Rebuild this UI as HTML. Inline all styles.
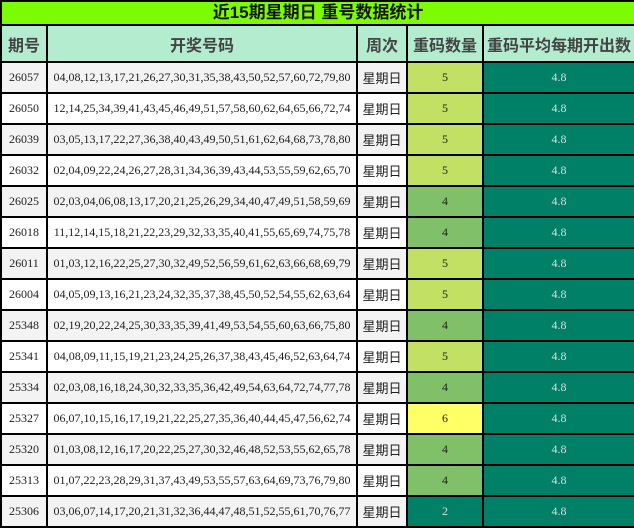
<!DOCTYPE html>
<html><head><meta charset="utf-8"><style>
body{margin:0;background:#fff}
table{border-collapse:collapse;table-layout:fixed;width:634px;font-family:"Liberation Serif","Noto Serif CJK SC",serif;font-size:12px;color:#222}
td{border:2px solid #000;text-align:center;padding:0;white-space:nowrap;overflow:hidden}
.t td{background:#7cfc00;height:22px;line-height:22px;font-family:"Liberation Sans","Noto Sans CJK SC",sans-serif;font-weight:bold;font-size:17px;color:#111}
.h td{background:#b4ecd0;height:35px;font-family:"Liberation Sans","Noto Sans CJK SC",sans-serif;font-weight:bold;font-size:16px;color:#444}
.r td{height:29px}
.r:nth-child(odd) td{background:#f3f3f3}
.wk{font-family:"Liberation Sans","Noto Sans CJK SC",sans-serif;font-size:13px}
.r td.c5{background:#c1e064}.r td.c4{background:#80c068}.r td.c6{background:#ffff66}.r td.c2{background:#008066;color:#ddd}
.r td.a{background:#008066;color:#ddd}
</style></head><body>
<table>
<colgroup><col style="width:46px"><col style="width:310px"><col style="width:50px"><col style="width:76px"><col style="width:152px"></colgroup>
<tbody>
<tr class="t"><td colspan="5">近15期星期日 重号数据统计</td></tr>
<tr class="h"><td>期号</td><td>开奖号码</td><td>周次</td><td>重码数量</td><td>重码平均每期开出数</td></tr>
</tbody>
<tbody>
<tr class="r"><td>26057</td><td>04,08,12,13,17,21,26,27,30,31,35,38,43,50,52,57,60,72,79,80</td><td class="wk">星期日</td><td class="c5">5</td><td class="a">4.8</td></tr>
<tr class="r"><td>26050</td><td>12,14,25,34,39,41,43,45,46,49,51,57,58,60,62,64,65,66,72,74</td><td class="wk">星期日</td><td class="c5">5</td><td class="a">4.8</td></tr>
<tr class="r"><td>26039</td><td>03,05,13,17,22,27,36,38,40,43,49,50,51,61,62,64,68,73,78,80</td><td class="wk">星期日</td><td class="c5">5</td><td class="a">4.8</td></tr>
<tr class="r"><td>26032</td><td>02,04,09,22,24,26,27,28,31,34,36,39,43,44,53,55,59,62,65,70</td><td class="wk">星期日</td><td class="c5">5</td><td class="a">4.8</td></tr>
<tr class="r"><td>26025</td><td>02,03,04,06,08,13,17,20,21,25,26,29,34,40,47,49,51,58,59,69</td><td class="wk">星期日</td><td class="c4">4</td><td class="a">4.8</td></tr>
<tr class="r"><td>26018</td><td>11,12,14,15,18,21,22,23,29,32,33,35,40,41,55,65,69,74,75,78</td><td class="wk">星期日</td><td class="c4">4</td><td class="a">4.8</td></tr>
<tr class="r"><td>26011</td><td>01,03,12,16,22,25,27,30,32,49,52,56,59,61,62,63,66,68,69,79</td><td class="wk">星期日</td><td class="c5">5</td><td class="a">4.8</td></tr>
<tr class="r"><td>26004</td><td>04,05,09,13,16,21,23,24,32,35,37,38,45,50,52,54,55,62,63,64</td><td class="wk">星期日</td><td class="c5">5</td><td class="a">4.8</td></tr>
<tr class="r"><td>25348</td><td>02,19,20,22,24,25,30,33,35,39,41,49,53,54,55,60,63,66,75,80</td><td class="wk">星期日</td><td class="c4">4</td><td class="a">4.8</td></tr>
<tr class="r"><td>25341</td><td>04,08,09,11,15,19,21,23,24,25,26,37,38,43,45,46,52,63,64,74</td><td class="wk">星期日</td><td class="c5">5</td><td class="a">4.8</td></tr>
<tr class="r"><td>25334</td><td>02,03,08,16,18,24,30,32,33,35,36,42,49,54,63,64,72,74,77,78</td><td class="wk">星期日</td><td class="c4">4</td><td class="a">4.8</td></tr>
<tr class="r"><td>25327</td><td>06,07,10,15,16,17,19,21,22,25,27,35,36,40,44,45,47,56,62,74</td><td class="wk">星期日</td><td class="c6">6</td><td class="a">4.8</td></tr>
<tr class="r"><td>25320</td><td>01,03,08,12,16,17,20,22,25,27,30,32,46,48,52,53,55,62,65,78</td><td class="wk">星期日</td><td class="c4">4</td><td class="a">4.8</td></tr>
<tr class="r"><td>25313</td><td>01,07,22,23,28,29,31,37,43,49,53,55,57,63,64,69,73,76,79,80</td><td class="wk">星期日</td><td class="c4">4</td><td class="a">4.8</td></tr>
<tr class="r"><td>25306</td><td>03,06,07,14,17,20,21,31,32,36,44,47,48,51,52,55,61,70,76,77</td><td class="wk">星期日</td><td class="c2">2</td><td class="a">4.8</td></tr>
</tbody>
</table>
</body></html>
